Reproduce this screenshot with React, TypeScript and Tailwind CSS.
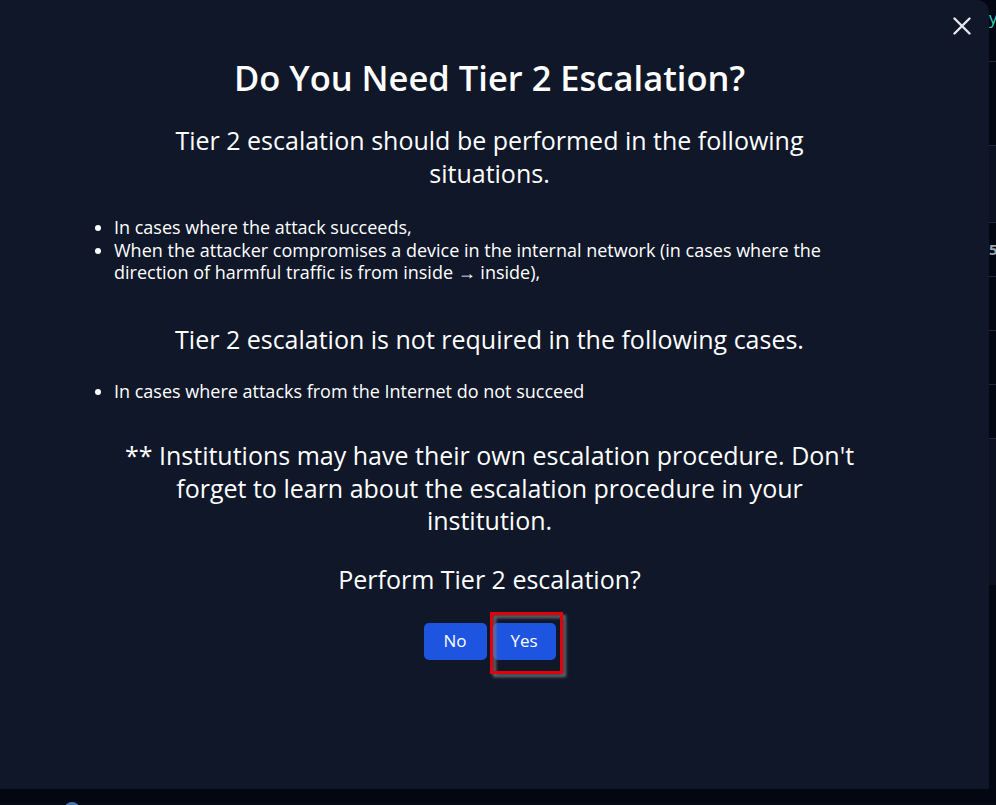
import { useState } from 'react'

function CloseIcon() {
  return (
    <svg width="18" height="18" viewBox="0 0 18 18" fill="none" stroke="currentColor" strokeWidth="2.4" strokeLinecap="round">
      <path d="M1.5 1.5L16.5 16.5M16.5 1.5L1.5 16.5" />
    </svg>
  )
}

// the page behind the dialog, only a sliver of it shows on the right
function BackgroundPage() {
  return (
    <div className="flex h-[789px]">
      <div className="w-[989px] shrink-0" />
      <div className="flex w-[300px] shrink-0 flex-col">
        <div className="h-[62px] border-b border-[#1e293b] pt-[8px] text-[17px] leading-[20px] text-[#2dd4bf]">yara</div>
        <div className="h-[84px] border-b border-[#1e293b]" />
        <div className="h-[77px] border-b border-[#1e293b] bg-[#0b1120]" />
        <div className="flex h-[54px] items-center border-b border-[#1e293b] text-[15px] font-bold text-[#9ca3af]">5</div>
        <div className="h-[54px] border-b border-[#1e293b]" />
        <div className="h-[54px] border-b border-[#1e293b]" />
        <div className="h-[54px] border-b border-[#1e293b]" />
        <div className="h-[146px] bg-[#0b1120]" />
      </div>
    </div>
  )
}

export default function App() {
  const [answer, setAnswer] = useState<string | null>(null)

  return (
    <div className="relative h-screen w-full overflow-hidden bg-[#030712] font-['Open_Sans','Noto_Sans',sans-serif]">
      <BackgroundPage />
      <div className="h-4 bg-[#050a15]">
        <div className="ml-[64px] mt-[13px] h-4 w-4 rounded-full bg-[#60a5fa]/70" />
      </div>

      {/* dialog */}
      <div className="absolute left-0 top-0 h-[789px] w-[989px] rounded-tr-xl bg-[#0f1729] text-white">
        <button className="absolute right-[18px] top-[17px] text-[#e5e7eb]" aria-label="Close">
          <CloseIcon />
        </button>

        <div className="flex flex-col items-center pl-[94px] pr-[104px] pt-[60px]">
          <h2 className="text-[34.5px] leading-9 font-semibold">Do You Need Tier 2 Escalation?</h2>

          <p className="mt-7 max-w-[740px] text-center text-[25px] leading-[33px]">
            Tier 2 escalation should be performed in the following situations.
          </p>

          <ul className="mt-[26px] list-disc self-stretch pl-5 text-lg leading-[22.5px]">
            <li>In cases where the attack succeeds,</li>
            <li>
              When the attacker compromises a device in the internal network (in cases where the direction of harmful traffic is from inside → inside),
            </li>
          </ul>

          <p className="mt-[39px] max-w-[740px] text-center text-[25px] leading-[33px]">
            Tier 2 escalation is not required in the following cases.
          </p>

          <ul className="mt-6 list-disc self-stretch pl-5 text-lg leading-[22.5px]">
            <li>In cases where attacks from the Internet do not succeed</li>
          </ul>

          <p className="mt-[37px] max-w-[740px] text-center text-[25px] leading-[32.5px]">
            ** Institutions may have their own escalation procedure. Don't forget to learn about the escalation procedure in your institution.
          </p>

          <p className="mt-[26px] text-[25px] leading-8">Perform Tier 2 escalation?</p>

          <div className="mt-[28px] flex gap-[6px]">
            <button
              onClick={() => setAnswer('no')}
              className="h-[37px] w-[63px] rounded-[5px] bg-[#1d55e0] text-[17px] text-white"
            >
              No
            </button>
            <div className="relative">
              <button
                onClick={() => setAnswer('yes')}
                className="h-[37px] w-[63px] rounded-[5px] bg-[#1d55e0] text-[17px] text-white"
              >
                Yes
              </button>
              <div className="pointer-events-none absolute -left-[3px] -top-[11px] h-[62px] w-[73px] border-[3px] border-[#e3000b] drop-shadow-[3px_3px_1.5px_rgba(120,120,120,0.9)]" />
            </div>
          </div>
          {answer && <span className="sr-only">{answer}</span>}
        </div>
      </div>
    </div>
  )
}
